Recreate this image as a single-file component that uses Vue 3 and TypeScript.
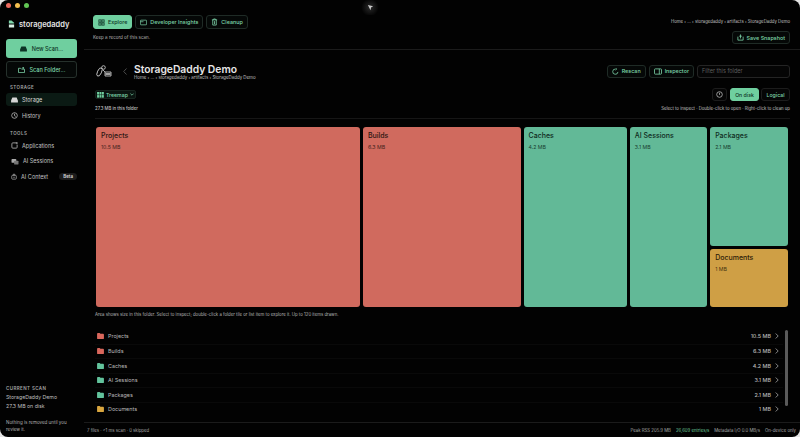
<script setup lang="ts">
const tiles = [
  { name: 'Projects', size: '10.5 MB', kind: 'red', area: 'a' },
  { name: 'Builds', size: '6.3 MB', kind: 'red', area: 'b' },
  { name: 'Caches', size: '4.2 MB', kind: 'green', area: 'c' },
  { name: 'AI Sessions', size: '3.1 MB', kind: 'green', area: 'd' },
  { name: 'Packages', size: '2.1 MB', kind: 'green', area: 'e' },
  { name: 'Documents', size: '1 MB', kind: 'amber', area: 'f' },
]
</script>

<template>
  <div class="window">
    <aside class="sidebar">
      <div class="lights"><i class="l1"></i><i class="l2"></i><i class="l3"></i></div>
      <div class="brand">
        <svg width="7" height="8" viewBox="0 0 8 9"><path d="M1 0.5h3l3 2.5v1H1z" fill="#7fd8ac" /><path d="M1 5h6v3.5H1z" fill="#d8efe4" /></svg>
        <span>storagedaddy</span>
      </div>
      <button class="primary-btn">
        <svg width="7" height="6" viewBox="0 0 8 7"><path d="M1.5 0.5h5L8 4v2.5H0V4z" fill="#0d3325" /></svg>
        New Scan...
      </button>
      <button class="outline-btn">
        <svg width="7" height="6" viewBox="0 0 8 7" fill="none" stroke="#7fd8ac" stroke-width="0.9"><path d="M0.5 1.5h2.5l1 1h3.5v4h-7zM6 0v2.5M5 1h2" /></svg>
        Scan Folder...
      </button>

      <div class="group-label first">STORAGE</div>
      <div class="nav-item active">
        <svg width="7" height="6" viewBox="0 0 8 7"><path d="M1.5 0.5h5L8 4v2.5H0V4z" fill="#d5d5d5" /></svg>
        Storage
      </div>
      <div class="nav-item">
        <svg width="7" height="7" viewBox="0 0 8 8" fill="none" stroke="#bbb" stroke-width="0.9"><circle cx="4" cy="4" r="3.2" /><path d="M4 2v2.2l1.4.8" /></svg>
        History
      </div>

      <div class="group-label second">TOOLS</div>
      <div class="nav-item">
        <svg width="7" height="7" viewBox="0 0 8 8" fill="none" stroke="#bbb" stroke-width="0.9"><path d="M6 1H2Q1 1 1 2v4q0 1 1 1h4q1 0 1-1V3" /><circle cx="6.6" cy="1.2" r="0.7" /></svg>
        Applications
      </div>
      <div class="nav-item">
        <svg width="8" height="7" viewBox="0 0 9 8"><rect x="0.5" y="1" width="5.5" height="4.5" rx="1" fill="#aaa" /><rect x="3.5" y="3" width="5" height="4.5" rx="1" fill="#777" /></svg>
        AI Sessions
      </div>
      <div class="nav-item">
        <svg width="7" height="7" viewBox="0 0 8 8" fill="none" stroke="#bbb" stroke-width="0.9"><rect x="1" y="2.5" width="6" height="5" rx="1" /><path d="M3 2.5V1h2v1.5M3 5h2" /></svg>
        <span class="nav-text">AI Context</span>
        <span class="beta">Beta</span>
      </div>

      <div class="scan-info">
        <div class="group-label">CURRENT SCAN</div>
        <p class="scan-name">StorageDaddy Demo</p>
        <p class="scan-name">27.3 MB on disk</p>
        <p class="scan-note">Nothing is removed until you review it.</p>
      </div>
    </aside>

    <main class="main">
      <header class="topbar">
        <div class="topbar-left">
          <nav class="tabs">
            <button class="tab selected">
              <svg width="7" height="7" viewBox="0 0 8 8" fill="none" stroke="#0d3325" stroke-width="0.9"><rect x="1" y="1" width="2.5" height="2.5" /><rect x="4.5" y="1" width="2.5" height="2.5" /><rect x="1" y="4.5" width="2.5" height="2.5" /><rect x="4.5" y="4.5" width="2.5" height="2.5" /></svg>
              Explore
            </button>
            <button class="tab">
              <svg width="7" height="7" viewBox="0 0 9 8" fill="none" stroke="#7fd8ac" stroke-width="0.9"><rect x="0.5" y="1" width="8" height="6" rx="0.8" /><path d="M0.5 3h4" /></svg>
              Developer Insights
            </button>
            <button class="tab">
              <svg width="7" height="8" viewBox="0 0 8 9" fill="none" stroke="#7fd8ac" stroke-width="0.9"><path d="M1 2h6M3 2V1h2v1M2 2v6h4V2M4 3.5V7" /></svg>
              Cleanup
            </button>
          </nav>
          <p class="record">Keep a record of this scan.</p>
        </div>
        <div class="topbar-right">
          <div class="crumbs">Home › ... › storagedaddy › artifacts › StorageDaddy Demo</div>
          <button class="ghost-btn">
            <svg width="7" height="7" viewBox="0 0 8 8" fill="none" stroke="#7fd8ac" stroke-width="0.9"><path d="M1 3v4h6V3M4 0.5V5M2.5 2.5h3" /></svg>
            Save Snapshot
          </button>
        </div>
      </header>

      <section class="content">
        <div class="folder-head">
          <svg class="mascot" width="16" height="14" viewBox="0 0 16 14" fill="none" stroke="#d8d8d8" stroke-width="0.8"><ellipse cx="3.5" cy="8" rx="2" ry="4.5" transform="rotate(25 3.5 8)" /><circle cx="7.5" cy="3.5" r="1.8" /><path d="M7 6l2 2h6M9 8v4h6V8" /><path d="M9.5 10h5" stroke-width="1.4" /></svg>
          <svg class="back" width="4" height="7" viewBox="0 0 4 7" fill="none" stroke="#555" stroke-width="0.9"><path d="M3.5 0.5L0.7 3.5l2.8 3" /></svg>
          <div class="titles">
            <h1>StorageDaddy Demo</h1>
            <div class="crumbs">Home › ... › storagedaddy › artifacts › StorageDaddy Demo</div>
          </div>
          <div class="head-actions">
            <button class="ghost-btn">
              <svg width="7" height="7" viewBox="0 0 8 8" fill="none" stroke="#7fd8ac" stroke-width="0.9"><path d="M6.8 4.5A3 3 0 1 1 4 1.2M4 0l1.4 1.2L4 2.4" /></svg>
              Rescan
            </button>
            <button class="ghost-btn">
              <svg width="8" height="7" viewBox="0 0 9 8" fill="none" stroke="#7fd8ac" stroke-width="0.9"><rect x="0.5" y="1" width="8" height="6" rx="0.8" /><path d="M6 1v6" /></svg>
              Inspector
            </button>
            <div class="filter">Filter this folder</div>
          </div>
        </div>

        <div class="view-row">
          <button class="view-select">
            <svg width="7" height="6" viewBox="0 0 8 7" fill="#6fcf9f"><rect x="0" y="0" width="2.3" height="3" /><rect x="2.8" y="0" width="2.3" height="3" /><rect x="5.6" y="0" width="2.3" height="3" /><rect x="0" y="3.6" width="2.3" height="3" /><rect x="2.8" y="3.6" width="2.3" height="3" /><rect x="5.6" y="3.6" width="2.3" height="3" /></svg>
            Treemap
            <svg width="4" height="3" viewBox="0 0 4 3" fill="none" stroke="#7fd8ac" stroke-width="0.7"><path d="M0.4 0.6L2 2.2 3.6 0.6" /></svg>
          </button>
          <div class="modes">
            <button class="mode-icon">
              <svg width="7" height="7" viewBox="0 0 8 8" fill="none" stroke="#bbb" stroke-width="0.9"><circle cx="4" cy="4" r="3.2" /><path d="M4 2v2.4" /></svg>
            </button>
            <button class="mode on">On disk</button>
            <button class="mode">Logical</button>
          </div>
        </div>

        <div class="meta-row">
          <span class="folder-size">27.3 MB in this folder</span>
          <span>Select to inspect · Double-click to open · Right-click to clean up</span>
        </div>

        <div class="treemap">
          <div v-for="t in tiles" :key="t.name" class="tile" :class="[t.kind, t.area]">
            <div class="tile-name">{{ t.name }}</div>
            <div class="tile-size">{{ t.size }}</div>
          </div>
        </div>

        <p class="caption">Area shows size in this folder. Select to inspect; double-click a folder tile or list item to explore it. Up to 120 items drawn.</p>

        <div class="list-wrap">
          <ul class="list">
            <li v-for="t in tiles" :key="t.name" class="row">
              <svg width="7" height="6" viewBox="0 0 8 7"><path d="M0 1q0-1 1-1h2l1 1h3q1 0 1 1v4q0 1-1 1H1q-1 0-1-1z" :class="t.kind + '-fill'" /></svg>
              <span class="row-name">{{ t.name }}</span>
              <span class="row-size">{{ t.size }}</span>
              <svg width="4" height="6" viewBox="0 0 4 6" fill="none" stroke="#aaa" stroke-width="0.8"><path d="M0.7 0.5L3.2 3 0.7 5.5" /></svg>
            </li>
          </ul>
          <div class="scrollbar"></div>
        </div>
      </section>

      <footer class="status">
        <span>7 files · &lt;1 ms scan · 0 skipped</span>
        <span class="status-right">
          <span>Peak RSS 205.9 MB</span>
          <span class="mint">26,609 entries/s</span>
          <span>Metadata I/O 0.0 MB/s</span>
          <span>On-device only</span>
        </span>
      </footer>
    </main>

    <div class="capture-icon">
      <svg width="7" height="7" viewBox="0 0 8 8"><path d="M1 1l6 1.5L4.6 4 4 7z" fill="#c8c8c8" /></svg>
    </div>
  </div>
</template>

<style>
html, body { margin: 0; background: #e4e4e4; }
</style>

<style scoped>
* { box-sizing: border-box; }

.window {
  position: relative;
  display: flex;
  width: 800px;
  height: 437px;
  overflow: hidden;
  background: #020202;
  border-radius: 8px;
  color: #d8d8d8;
  font-family: Inter, "Liberation Sans", sans-serif;
  font-size: 5px;
}

button {
  font-family: inherit;
  cursor: pointer;
  white-space: nowrap;
}

p { margin: 0; }

.sidebar {
  display: flex;
  flex-direction: column;
  flex: 0 0 84px;
  padding: 3px 6px 4px;
}

.lights { display: flex; gap: 4px; height: 5px; }
.lights i { width: 5px; height: 5px; border-radius: 50%; }
.l1 { background: #ec6a5e; }
.l2 { background: #f4bf4f; }
.l3 { background: #61c554; }

.brand {
  display: flex;
  align-items: center;
  gap: 4px;
  margin: 12px 0 1px 2px;
  height: 8px;
  font-size: 7.5px;
  font-weight: 600;
  color: #e4e4e4;
}

.primary-btn, .outline-btn {
  display: flex;
  align-items: center;
  justify-content: center;
  gap: 5px;
  width: 71px;
  font-size: 5.5px;
  font-weight: 500;
  border-radius: 3px;
}

.primary-btn {
  height: 19px;
  margin-top: 10px;
  background: #6fcf9f;
  border: 0;
  color: #0d3325;
}

.outline-btn {
  height: 17px;
  margin-top: 3px;
  background: #050807;
  border: 1px solid #26312c;
  color: #7fd8ac;
}

.group-label {
  font-size: 4.5px;
  font-weight: 600;
  letter-spacing: 0.4px;
  color: #a5a5a5;
}

.group-label.first { margin: 7px 0 3px 4px; }
.group-label.second { margin: 7px 0 2.5px 4px; }

.nav-item {
  display: flex;
  align-items: center;
  gap: 4px;
  width: 71px;
  height: 15.5px;
  padding-left: 5px;
  font-size: 5.5px;
  color: #c4c4c4;
  border-radius: 3px;
  white-space: nowrap;
}

.nav-item.active {
  height: 13px;
  background: #0b1a14;
  color: #dcdcdc;
  margin-bottom: 2px;
}

.beta {
  margin-left: 7px;
  padding: 1px 4px;
  background: #1c1c1c;
  border-radius: 4px;
  font-size: 4.5px;
  font-weight: 600;
  color: #d8d8d8;
}

.scan-info { margin-top: auto; }

.scan-info .group-label { margin-bottom: 2px; }

.scan-name {
  font-size: 5.2px;
  line-height: 9px;
  color: #bfbfbf;
}

.scan-note {
  margin-top: 8px;
  width: 66px;
  font-size: 4.5px;
  line-height: 7px;
  color: #b0b0b0;
}

.main {
  display: flex;
  flex-direction: column;
  flex: 1;
  min-width: 0;
}

.topbar {
  display: flex;
  justify-content: space-between;
  flex: 0 0 50px;
  padding: 15px 10px 0 9px;
  border-bottom: 1px solid #1b1b1b;
}

.tabs { display: flex; gap: 3px; }

.tab {
  display: flex;
  align-items: center;
  gap: 3px;
  height: 14px;
  padding: 0 4px;
  background: #050807;
  border: 1px solid #1f2b26;
  border-radius: 3px;
  color: #7fd8ac;
  font-size: 5.4px;
  font-weight: 500;
}

.tab.selected {
  background: #6fcf9f;
  border-color: #6fcf9f;
  color: #0d3325;
}

.record {
  margin-top: 6px;
  font-size: 4.5px;
  color: #b5b5b5;
}

.topbar-right {
  display: flex;
  flex-direction: column;
  align-items: flex-end;
  padding-top: 4px;
}

.crumbs {
  font-size: 4.4px;
  color: #c0c0c0;
}

.topbar-right .crumbs { font-size: 4.3px; }
.topbar-right .ghost-btn { margin-top: 7px; }

.ghost-btn {
  display: flex;
  align-items: center;
  gap: 3px;
  height: 13px;
  padding: 0 4px;
  background: #050807;
  border: 1px solid #1f2b26;
  border-radius: 3px;
  color: #7fd8ac;
  font-size: 5.4px;
  font-weight: 500;
}

.content {
  display: flex;
  flex-direction: column;
  flex: 1;
  min-height: 0;
  padding: 11px 10px 0 11px;
}

.folder-head {
  display: flex;
  align-items: center;
  height: 20px;
  margin-left: 1px;
}

.mascot { margin-right: 11px; }
.back { margin-right: 7px; }

.titles h1 {
  margin: 0;
  font-size: 10.3px;
  line-height: 12px;
  font-weight: 600;
  color: #e6e6e6;
}

.head-actions {
  display: flex;
  gap: 3px;
  margin-left: auto;
  align-items: center;
}

.filter {
  display: flex;
  align-items: center;
  width: 93px;
  height: 13px;
  padding-left: 4px;
  background: #050505;
  border: 1px solid #242424;
  border-radius: 3px;
  font-size: 5.5px;
  color: #5f5f5f;
}

.view-row {
  display: flex;
  justify-content: space-between;
  align-items: center;
  height: 13px;
  margin-top: 7px;
}

.view-select {
  display: flex;
  align-items: center;
  gap: 2px;
  height: 9px;
  padding: 0 1px;
  background: #0a1410;
  border: 1px solid #17241e;
  border-radius: 2px;
  color: #7fd8ac;
  font-size: 5.2px;
  font-weight: 500;
}

.modes { display: flex; gap: 2px; }

.mode {
  width: 29px;
  height: 13px;
  padding: 0;
  background: #050505;
  border: 1px solid #1c1c1c;
  border-radius: 3px;
  color: #7fd8ac;
  font-size: 5.2px;
  font-weight: 500;
}

.mode.on { background: #6fcf9f; border-color: #6fcf9f; color: #0d3325; }

.mode-icon {
  display: flex;
  align-items: center;
  justify-content: center;
  width: 15px;
  height: 13px;
  margin-right: 1px;
  padding: 0;
  background: #050505;
  border: 1px solid #1c1c1c;
  border-radius: 3px;
}

.meta-row {
  display: flex;
  justify-content: space-between;
  align-items: center;
  height: 17.5px;
  padding: 2px 0 4px;
  font-size: 4.3px;
  color: #c0c0c0;
  border-bottom: 1px solid #161616;
}

.folder-size { font-weight: 500; }

.treemap {
  display: grid;
  grid-template-columns: 264.5fr 158fr 103.5fr 77.5fr 78fr;
  grid-template-rows: 119fr 58fr;
  gap: 3px;
  height: 180px;
  margin: 8.5px 2px 0 1px;
  grid-template-areas:
    "a b c d e"
    "a b c d f";
}

.a { grid-area: a; }
.b { grid-area: b; }
.c { grid-area: c; }
.d { grid-area: d; }
.e { grid-area: e; }
.f { grid-area: f; }

.tile {
  padding: 4px 5px;
  border-radius: 3px;
  color: #2a1512;
}

.tile-name { font-size: 7px; line-height: 9px; font-weight: 500; }
.tile-size { margin-top: 4px; font-size: 5.2px; opacity: 0.85; }

.red { background: #d06a5e; }
.green { background: #62b997; color: #0e2a20; }
.amber { background: #cf9f45; color: #2c2008; }

.red-fill { fill: #d9675c; }
.green-fill { fill: #62c39c; }
.amber-fill { fill: #d9a63f; }

.caption {
  margin-top: 5px;
  font-size: 4.3px;
  color: #b5b5b5;
}

.list-wrap {
  position: relative;
  flex: 1;
  margin: 12px 2px 0 0;
}

.list {
  margin: 0;
  padding: 0 5px 0 0;
  list-style: none;
}

.row {
  display: flex;
  align-items: center;
  gap: 4px;
  height: 14.5px;
  padding: 0 4px 0 2px;
  font-size: 5.4px;
  color: #b9b9b9;
}

.row + .row { border-top: 1px solid #090909; }

.row-size {
  margin-left: auto;
  margin-right: 0;
  font-weight: 500;
}

.scrollbar {
  position: absolute;
  top: 1px;
  right: 0;
  width: 3px;
  height: 76px;
  background: #5a5a5a;
  border-radius: 2px;
}

.status {
  display: flex;
  justify-content: space-between;
  align-items: center;
  flex: 0 0 15px;
  padding: 0 4px 0 3px;
  border-top: 1px solid #1b1b1b;
  font-size: 4.3px;
  color: #a8a8a8;
}

.status-right { display: flex; gap: 5px; }
.mint { color: #6fcf9f; }

.capture-icon {
  position: absolute;
  top: 0;
  left: 360px;
  display: flex;
  align-items: center;
  justify-content: center;
  width: 20px;
  height: 15px;
  background: radial-gradient(circle, #2a2a2a 0%, #020202 70%);
}
</style>
